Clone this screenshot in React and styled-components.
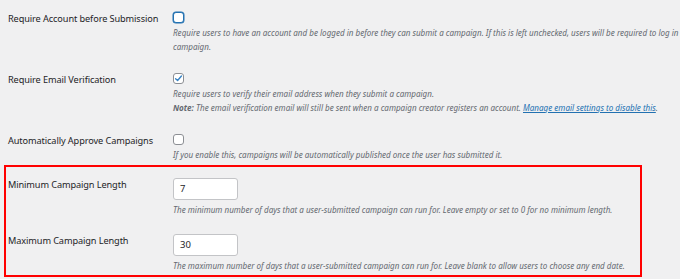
import React from "react";
import styled, { createGlobalStyle } from "styled-components";

const GlobalStyle = createGlobalStyle`
  body {
    margin: 0;
    background: #f0f0f1;
    font-family: "Noto Sans", "Liberation Sans", sans-serif;
    color: #1d2327;
  }
`;

const Page = styled.div`
  width: 680px;
  height: 279px;
  overflow: hidden;
  padding-top: 12px;
  box-sizing: border-box;
`;

const Section = styled.div`
  display: flex;
  flex-direction: column;
  gap: ${(p) => p.$gap}px;
`;

const Highlight = styled.div`
  margin: 3px 0 0 4px;
  width: 638px;
  height: 112px;
  box-sizing: border-box;
  border: 2px solid #f00;
  padding: 11px 2px 0 2px;
  display: flex;
  flex-direction: column;
  gap: 18px;
`;

const Row = styled.div`
  display: grid;
  grid-template-columns: 165px 1fr;
  padding-left: ${(p) => p.$indent ?? 8}px;
`;

const Label = styled.div`
  font-size: 9.2px;
  letter-spacing: -0.1px;
  line-height: 14px;
  padding-top: ${(p) => p.$offset || 0}px;
  white-space: nowrap;
`;

const Field = styled.div`
  display: flex;
  flex-direction: column;
  align-items: flex-start;
  min-width: 0;
`;

const Checkbox = styled.span`
  width: 11px;
  height: 11px;
  box-sizing: border-box;
  border-radius: 3px;
  background: #fff;
  border: ${(p) => (p.$focused ? "1.5px solid #2271b1" : "1px solid #8c8f94")};
  box-shadow: ${(p) => (p.$focused ? "0 0 0 0.5px #2271b1" : "none")};
  display: flex;
  align-items: center;
  justify-content: center;
`;

const NumberInput = styled.div`
  width: 65px;
  height: 22px;
  box-sizing: border-box;
  border: 1px solid #c3c4c7;
  border-radius: 3px;
  background: #fff;
  font-size: 9.5px;
  line-height: 20px;
  padding-left: 6px;
`;

const Description = styled.p`
  margin: 3px 0 0;
  font-size: 8.05px;
  line-height: 13.5px;
  font-style: italic;
  color: #646970;
  white-space: nowrap;
`;

const Link = styled.a`
  color: #2271b1;
  text-decoration: underline;
`;

const Check = () => (
  <svg width="9" height="9" viewBox="0 0 20 20">
    <path
      d="M3.5 10.5 L8 14.5 L16.5 4.5"
      fill="none"
      stroke="#3582c4"
      strokeWidth="3"
      strokeLinecap="round"
      strokeLinejoin="round"
    />
  </svg>
);

export default function App() {
  return (
    <Page>
      <GlobalStyle />
      <Section $gap={20}>
        <Row>
          <Label>Require Account before Submission</Label>
          <Field>
            <Checkbox $focused />
            <Description>
              Require users to have an account and be logged in before they can
              submit a campaign. If this is left unchecked, users will be
              required to log in
              <br />
              campaign.
            </Description>
          </Field>
        </Row>
        <Row>
          <Label>Require Email Verification</Label>
          <Field>
            <Checkbox>
              <Check />
            </Checkbox>
            <Description>
              Require users to verify their email address when they submit a
              campaign.
              <br />
              <b>Note:</b> The email verification email will still be sent when
              a campaign creator registers an account.{" "}
              <Link href="#">Manage email settings to disable this</Link>.
            </Description>
          </Field>
        </Row>
        <Row>
          <Label>Automatically Approve Campaigns</Label>
          <Field>
            <Checkbox />
            <Description>
              If you enable this, campaigns will be automatically published once
              the user has submitted it.
            </Description>
          </Field>
        </Row>
      </Section>
      <Highlight>
        <Row $indent={0}>
          <Label $offset={0}>Minimum Campaign Length</Label>
          <Field>
            <NumberInput>7</NumberInput>
            <Description>
              The minimum number of days that a user-submitted campaign can run
              for. Leave empty or set to 0 for no minimum length.
            </Description>
          </Field>
        </Row>
        <Row $indent={0}>
          <Label $offset={0}>Maximum Campaign Length</Label>
          <Field>
            <NumberInput>30</NumberInput>
            <Description>
              The maximum number of days that a user-submitted campaign can run
              for. Leave blank to allow users to choose any end date.
            </Description>
          </Field>
        </Row>
      </Highlight>
    </Page>
  );
}
